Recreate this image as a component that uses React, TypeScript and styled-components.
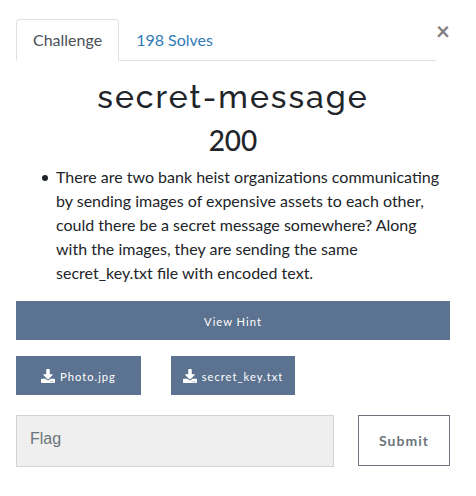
import React from "react";
import styled, { createGlobalStyle } from "styled-components";
import { FaDownload } from "react-icons/fa";

const GlobalStyle = createGlobalStyle`
  *, *::before, *::after { box-sizing: border-box; }
  body {
    margin: 0;
    background: #fff;
    color: #212529;
    font: 400 16px/1.5 Lato, sans-serif;
  }
`;

const Modal = styled.main`
  width: 476px;
  height: 496px;
  padding: 19px 26px 0 16px;
`;

const Header = styled.header`
  display: flex;
  align-items: flex-start;
  width: 434px;
`;

const Tabs = styled.nav`
  display: flex;
  flex: 0 0 420px;
  height: 42px;
  border-bottom: 1px solid #dee2e6;
`;

const Tab = styled.a<{ $active?: boolean }>`
  height: 42px;
  padding: 8px 16px;
  white-space: nowrap;
  border: 1px solid;
  border-color: ${(p) => (p.$active ? "#dee2e6 #dee2e6 #fff" : "transparent")};
  border-radius: 4px 4px 0 0;
  color: ${(p) => (p.$active ? "#495057" : "#337ab7")};
`;

const Close = styled.button`
  width: 14px;
  height: 24px;
  padding: 0;
  border: 0;
  background: none;
  color: #7f7f7f;
  font: 700 24px/24px Lato, sans-serif;
`;

const Title = styled.h2`
  width: 434px;
  margin: 17px 0 0;
  text-align: center;
  font: 500 32px/38px Raleway, Inter, sans-serif;
  letter-spacing: 2px;
`;

const Points = styled.h3`
  width: 434px;
  margin: 7px 0 8px;
  text-align: center;
  font: 500 28px/34px Lato, sans-serif;
`;

const Description = styled.ul`
  width: 434px;
  margin: 0 0 16px;
  padding-left: 26px;
  list-style: none;
`;

const DescriptionItem = styled.li`
  display: flex;
  gap: 8px;
  &::before {
    content: "";
    flex: 0 0 6px;
    height: 6px;
    margin-top: 10px;
    border-radius: 50%;
    background: currentColor;
  }
`;

const SolidButton = styled.button<{ $width: number }>`
  display: flex;
  align-items: center;
  justify-content: center;
  gap: 5px;
  width: ${(p) => p.$width}px;
  height: 39px;
  padding: 1px 0 0;
  border: 0;
  background: #5b7290;
  color: #fff;
  font: 400 11.2px/17px Lato, sans-serif;
  letter-spacing: 1px;
  svg { font-size: 14px; }
`;

const Files = styled.div`
  display: flex;
  gap: 30px;
  margin: 16px 0 20px;
`;

const Form = styled.form`
  display: flex;
  align-items: flex-start;
  gap: 24px;
`;

const FlagInput = styled.input`
  width: 318px;
  height: 52px;
  padding: 0 13px 4px;
  border: 1px solid #ced4da;
  border-radius: 0;
  background: #efefef;
  font: 16px "Liberation Sans", Arial, sans-serif;
  &::placeholder { color: #6c757d; opacity: 1; }
`;

const Submit = styled.button`
  width: 92px;
  height: 51px;
  padding: 0;
  border: 1px solid #6c757d;
  background: #fff;
  color: #6c757d;
  font: 700 14px/20px Lato, sans-serif;
  letter-spacing: 1px;
`;

export default function App() {
  return (
    <>
      <GlobalStyle />
      <Modal>
        <Header>
          <Tabs>
            <Tab $active>Challenge</Tab>
            <Tab>198 Solves</Tab>
          </Tabs>
          <Close aria-label="Close">×</Close>
        </Header>
        <Title>secret-message</Title>
        <Points>200</Points>
        <Description>
          <DescriptionItem>
            There are two bank heist organizations communicating by sending
            images of expensive assets to each other, could there be a secret
            message somewhere? Along with the images, they are sending the same
            secret_key.txt file with encoded text.
          </DescriptionItem>
        </Description>
        <SolidButton $width={434}>View Hint</SolidButton>
        <Files>
          <SolidButton $width={125}><FaDownload />Photo.jpg</SolidButton>
          <SolidButton $width={124}><FaDownload />secret_key.txt</SolidButton>
        </Files>
        <Form>
          <FlagInput placeholder="Flag" />
          <Submit type="button">Submit</Submit>
        </Form>
      </Modal>
    </>
  );
}
